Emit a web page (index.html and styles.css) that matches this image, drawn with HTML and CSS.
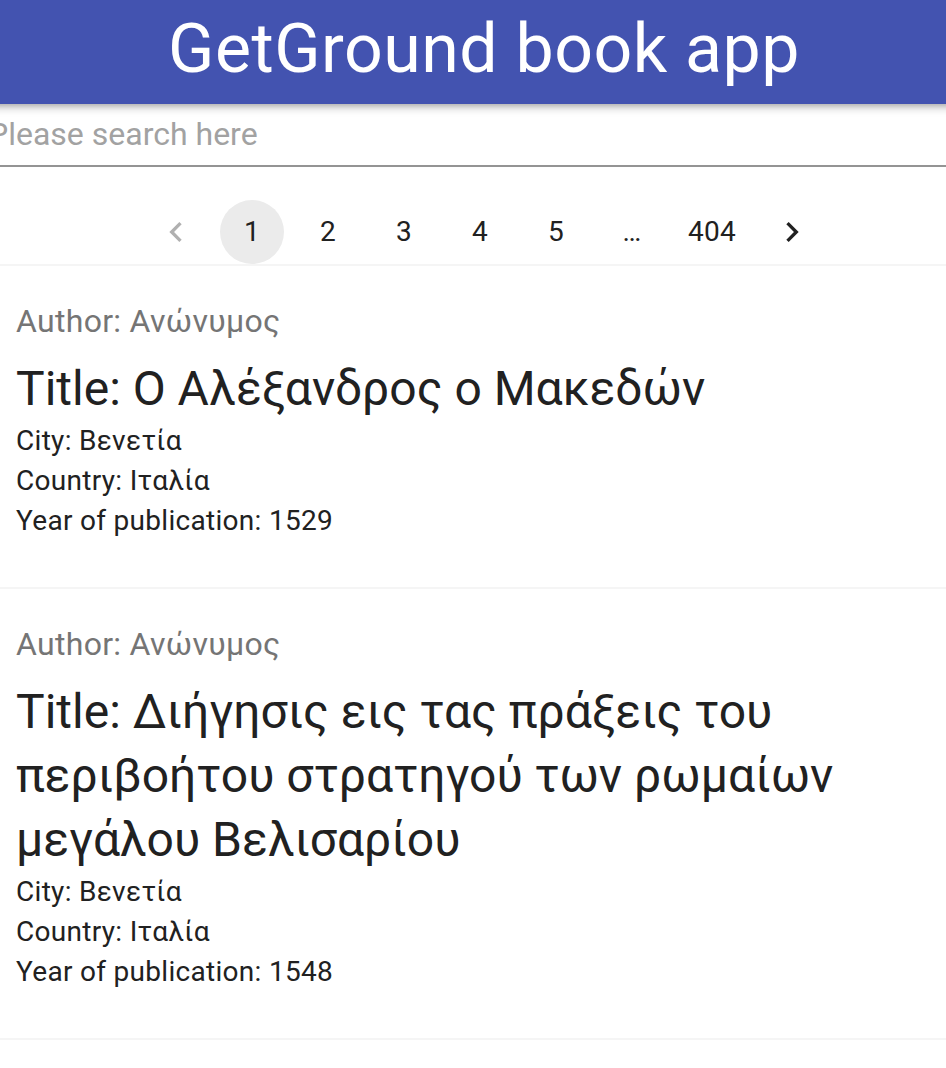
FILE: index.html
```html
<!DOCTYPE html>
<html lang="en">
<head>
<meta charset="utf-8">
<title>GetGround book app</title>
<link rel="stylesheet" href="styles.css">
</head>
<body>
<div class="app">
  <header class="appbar">
    <h1 class="app-title">GetGround book app</h1>
  </header>
  <div class="search">
    <input class="search-input" type="text" placeholder="Please search here">
  </div>
  <nav class="pagination">
    <button class="page-btn page-nav disabled" aria-label="Previous page">
      <svg viewBox="0 0 24 24" width="40" height="40"><path d="M15.41 7.41L14 6l-6 6 6 6 1.41-1.41L10.83 12z"/></svg>
    </button>
    <button class="page-btn selected">1</button>
    <button class="page-btn">2</button>
    <button class="page-btn">3</button>
    <button class="page-btn">4</button>
    <button class="page-btn">5</button>
    <span class="page-btn ellipsis">…</span>
    <button class="page-btn">404</button>
    <button class="page-btn page-nav" aria-label="Next page">
      <svg viewBox="0 0 24 24" width="40" height="40"><path d="M10 6L8.59 7.41 13.17 12l-4.58 4.59L10 18l6-6z"/></svg>
    </button>
  </nav>
  <section class="book-list">
    <article class="book-card">
      <p class="author">Author: Ανώνυμος</p>
      <h2 class="title">Title: Ο Αλέξανδρος ο Μακεδών</h2>
      <p class="meta">City: Βενετία</p>
      <p class="meta">Country: Ιταλία</p>
      <p class="meta">Year of publication: 1529</p>
    </article>
    <article class="book-card">
      <p class="author">Author: Ανώνυμος</p>
      <h2 class="title">Title: Διήγησις εις τας πράξεις του περιβοήτου στρατηγού των ρωμαίων μεγάλου Βελισαρίου</h2>
      <p class="meta">City: Βενετία</p>
      <p class="meta">Country: Ιταλία</p>
      <p class="meta">Year of publication: 1548</p>
    </article>
    <div class="list-end"></div>
  </section>
</div>
</body>
</html>
```

FILE: styles.css
```css
html, body {
  margin: 0;
  padding: 0;
  background: #ffffff;
  overflow: hidden;
}

body {
  font-family: Roboto, "Noto Sans", "Liberation Sans", sans-serif;
  color: #212121;
}

.app {
  width: 1000px;
  margin-left: -16px;
}

.appbar {
  position: relative;
  z-index: 2;
  height: 104px;
  background: #4353b0;
  box-shadow: 0 4px 8px rgba(0, 0, 0, 0.22), 0 2px 4px rgba(0, 0, 0, 0.12);
}

.app-title {
  margin: 0;
  font-size: 68px;
  font-weight: 400;
  line-height: 98px;
  text-align: center;
  color: #ffffff;
  letter-spacing: 0.5px;
}

.search {
  border-bottom: 2px solid #949494;
  padding-left: 4px;
}

.search-input {
  display: block;
  width: 100%;
  box-sizing: border-box;
  border: 0;
  outline: none;
  background: transparent;
  font-family: Roboto, "Noto Sans", "Liberation Sans", sans-serif;
  font-size: 32px;
  line-height: 38px;
  height: 61px;
  padding: 11px 0 12px;
  margin: 0;
  color: #212121;
}

.search-input::placeholder {
  color: #a2a2a2;
  opacity: 1;
}

.pagination {
  display: flex;
  justify-content: center;
  align-items: center;
  padding-top: 33px;
}

.page-btn {
  box-sizing: border-box;
  min-width: 64px;
  height: 64px;
  margin: 0 6px;
  padding: 0 12px;
  border: 0;
  border-radius: 32px;
  background: transparent;
  font-family: Roboto, "Noto Sans", "Liberation Sans", sans-serif;
  font-size: 28px;
  letter-spacing: 0.3px;
  line-height: 64px;
  color: #212121;
  display: flex;
  align-items: center;
  justify-content: center;
}

.page-btn.selected {
  background: #ebebeb;
}

.page-nav svg {
  fill: #212121;
}

.page-nav.disabled svg {
  fill: #b0b0b0;
}

.ellipsis {
  line-height: 64px;
}

.book-card {
  border-top: 2px solid #f5f5f5;
  padding: 31px 32px 46px;
}

.list-end {
  border-top: 2px solid #f5f5f5;
}

.author {
  margin: 0 0 12px;
  font-size: 32px;
  letter-spacing: 0.3px;
  line-height: 48px;
  color: #757575;
}

.title {
  margin: 0;
  font-size: 48px;
  font-weight: 400;
  line-height: 64px;
  color: #212121;
}

.meta {
  margin: 0;
  font-size: 28px;
  letter-spacing: 0.3px;
  line-height: 40px;
  color: #212121;
}
```
